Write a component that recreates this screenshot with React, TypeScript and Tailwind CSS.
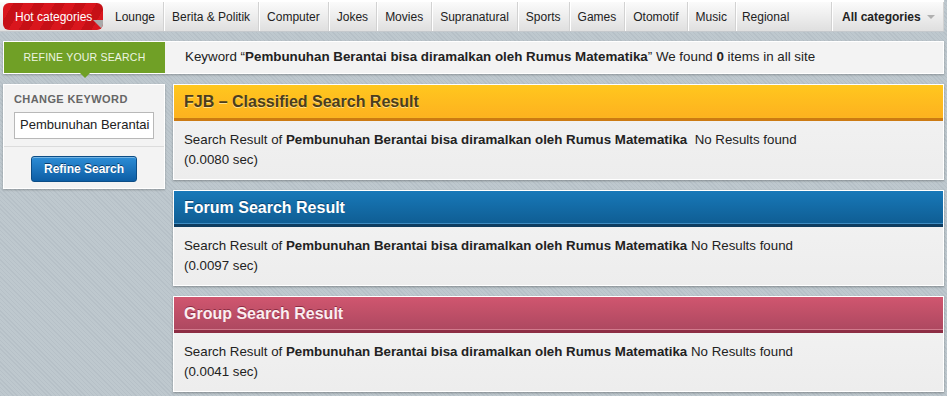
const keyword = "Pembunuhan Berantai bisa diramalkan oleh Rumus Matematika";

const navItems = ["Lounge", "Berita & Politik", "Computer", "Jokes", "Movies", "Supranatural", "Sports", "Games", "Otomotif", "Music"];

type Result = {
  title: string;
  time: string;
  header: string;
  titleText: string;
  line: string;
  gap?: boolean;
};

const results: Result[] = [
  {
    title: "FJB – Classified Search Result",
    time: "(0.0080 sec)",
    header: "bg-gradient-to-b from-[#ffc71e] to-[#fdb11f] border-b-[3px] border-[#cc7a12]",
    titleText: "text-[#4b3d1d] [text-shadow:0_1px_0_#ffe08a]",
    line: "bg-[#f8b622]",
    gap: true,
  },
  {
    title: "Forum Search Result",
    time: "(0.0097 sec)",
    header: "bg-gradient-to-b from-[#1879b9] to-[#0f5d93] border-b-[3px] border-[#0e3c5f]",
    titleText: "text-white [text-shadow:0_-1px_0_#0b4470]",
    line: "bg-[#3e8cc2]",
  },
  {
    title: "Group Search Result",
    time: "(0.0041 sec)",
    header: "bg-gradient-to-b from-[#d0566f] to-[#ad4860] border-b-[3px] border-[#8d2d44]",
    titleText: "text-[#fbeef1] [text-shadow:0_-1px_0_#8d2d44]",
    line: "bg-[#d27a8c]",
  },
];

function NavBar() {
  return (
    <div className="flex h-[32px] w-[944px] items-stretch border-b border-[#c4c8cc] bg-gradient-to-b from-[#fbfbfb] to-[#dfdfdf] border-t-2 border-t-white">
      <div className="relative my-[1px] ml-[3px] flex w-[100px] items-center overflow-hidden rounded-[6px] bg-[repeating-linear-gradient(120deg,#d9161d_0px,#d9161d_9px,#c61016_9px,#c61016_18px)] pl-[12px] text-white">
        Hot categories
        <div className="absolute right-0 bottom-0 h-0 w-0 border-t-[10px] border-l-[10px] border-t-[#a9a9a9] border-l-transparent" />
      </div>
      <div className="ml-[4px] flex items-stretch">
        {navItems.map((item) => (
          <div
            key={item}
            className="flex items-center border-r border-[#d2d2d2] px-[8px] text-[#222] [box-shadow:1px_0_0_#fff]"
          >
            {item}
          </div>
        ))}
        <div className="flex items-center px-[6px] text-[#222]">Regional</div>
      </div>
      <div className="flex-1" />
      <div className="flex w-[113px] items-center border-x border-[#d2d2d2] pl-[10px] font-bold text-[#222] [box-shadow:inset_1px_0_0_#fff]">
        All categories
        <span className="ml-[6px] mt-[1px] h-0 w-0 border-x-[4px] border-t-[4px] border-x-transparent border-t-[#b0b0b0]" />
      </div>
    </div>
  );
}

function RefineBar() {
  return (
    <div className="flex h-[33px] border border-white bg-[#f3f3f3] shadow-[0_1px_2px_rgba(0,0,0,0.25)]">
      <div className="relative flex w-[161px] items-center justify-center bg-[#70a026] text-[10.5px] tracking-[0.2px] text-[#eef5e2] uppercase">
        Refine your search
        <div className="absolute top-full left-[76px] h-0 w-0 border-x-[5px] border-t-[5px] border-x-transparent border-t-[#70a026]" />
      </div>
      <div className="flex items-center pl-[20px] text-[13.35px] text-[#222]">
        Keyword “<b>{keyword}</b>” We found&nbsp;<b>0</b>&nbsp;items in all site
      </div>
    </div>
  );
}

function Sidebar() {
  return (
    <div className="w-[162px] self-start border border-white bg-[#f3f3f3] shadow-[0_1px_2px_rgba(0,0,0,0.25)]">
      <div className="px-[10px] pt-[6px] pb-[7px]">
        <div className="text-[11px] font-bold tracking-[0.4px] text-[#666]">CHANGE KEYWORD</div>
        <div className="mt-[4px] flex h-[27px] items-center overflow-hidden border border-[#b8b8b8] bg-white pl-[5px] text-[13px] whitespace-nowrap text-[#222]">
          Pembunuhan Berantai
        </div>
      </div>
      <div className="border-t border-[#dcdcdc] [box-shadow:inset_0_1px_0_#fff]" />
      <div className="flex justify-center pt-[9px] pb-[6px]">
        <button className="h-[26px] w-[106px] rounded-[3px] border border-[#0c4d86] bg-gradient-to-b from-[#2c8dd6] to-[#0d5ea5] text-[12px] font-bold text-white [text-shadow:0_-1px_0_#0a3e6e] shadow-[inset_0_1px_0_rgba(255,255,255,0.35)]">
          Refine Search
        </button>
      </div>
    </div>
  );
}

function ResultPanel({ r }: { r: Result }) {
  return (
    <div className="border border-white bg-gradient-to-b from-[#f3f3f3] to-[#ededed] shadow-[0_1px_2px_rgba(0,0,0,0.3)]">
      <div className={`relative flex h-[36px] items-center pl-[10px] text-[16px] font-bold ${r.header}`}>
        <span className={r.titleText}>{r.title}</span>
        <div className={`absolute right-0 bottom-0 left-0 h-[1px] ${r.line}`} />
      </div>
      <div className="px-[10px] pt-[9px] pb-[9px] text-[13.3px] leading-[20px] text-[#222]">
        Search Result of <b>{keyword}</b>
        {r.gap ? <>&nbsp; </> : " "}No Results found
        <br />
        {r.time}
      </div>
    </div>
  );
}

export default function App() {
  return (
    <div className="h-[396px] w-[947px] overflow-hidden bg-[#b9c3ca] bg-[repeating-linear-gradient(45deg,#b6c0c7_0px,#b6c0c7_1px,#bec8ce_1px,#bec8ce_3px)] font-['Liberation_Sans',Arial,sans-serif] text-[12px]">
      <NavBar />
      <div className="w-[944px] pt-[9px] pl-[3px]">
        <RefineBar />
        <div className="mt-[10px] flex gap-[8px]">
          <Sidebar />
          <div className="flex flex-1 flex-col gap-[10px]">
            {results.map((r) => (
              <ResultPanel key={r.title} r={r} />
            ))}
          </div>
        </div>
      </div>
    </div>
  );
}
